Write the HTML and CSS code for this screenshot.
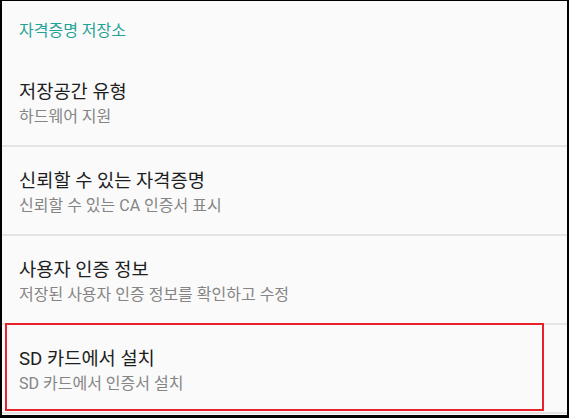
FILE: index.html
```html
<!DOCTYPE html>
<html lang="ko">
<head>
  <meta charset="UTF-8" />
  <meta name="viewport" content="width=device-width, initial-scale=1.0"/>
  <title>보안</title>
  <link rel="stylesheet" href="styles.css">
</head>
<body>

<div class="screen">
  <div class="section-title">자격증명 저장소</div>

  <div class="pref">
    <div class="pref-title">저장공간 유형</div>
    <div class="pref-summary">하드웨어 지원</div>
  </div>

  <div class="pref">
    <div class="pref-title">신뢰할 수 있는 자격증명</div>
    <div class="pref-summary">신뢰할 수 있는 CA 인증서 표시</div>
  </div>

  <div class="pref">
    <div class="pref-title">사용자 인증 정보</div>
    <div class="pref-summary">저장된 사용자 인증 정보를 확인하고 수정</div>
  </div>

  <div class="pref highlight">
    <div class="pref-title">SD 카드에서 설치</div>
    <div class="pref-summary">SD 카드에서 인증서 설치</div>
  </div>
</div>

</body>
</html>
```

FILE: styles.css
```css
  html, body {
    margin: 0;
    padding: 0;
  }

  body {
    font-family: Roboto, "Noto Sans CJK KR", sans-serif;
    background: #fafafa;
  }

  .screen {
    width: 565px;
    height: 414px;
    border-style: solid;
    border-color: #000;
    border-width: 1px 2px 3px 2px;
    background: #fafafa;
    overflow: hidden;
  }

  .section-title {
    color: #1fa396;
    font-size: 16px;
    line-height: 20px;
    padding: 20px 0 17px 17px;
  }

  .pref {
    position: relative;
    height: 87px;
    padding: 0 0 0 17px;
    border-bottom: 2px solid #e4e4e4;
  }

  .pref-title {
    padding-top: 22px;
    color: #1e1e1e;
    font-size: 18.7px;
    line-height: 24px;
  }

  .pref-summary {
    margin-top: 3px;
    color: #858585;
    font-size: 16px;
    line-height: 20px;
  }

  /* recuadro rojo encima del item */
  .highlight::after {
    content: "";
    position: absolute;
    left: 3px;
    right: 23px;
    top: -2px;
    bottom: 1px;
    border: 2px solid #e8212b;
  }
```
